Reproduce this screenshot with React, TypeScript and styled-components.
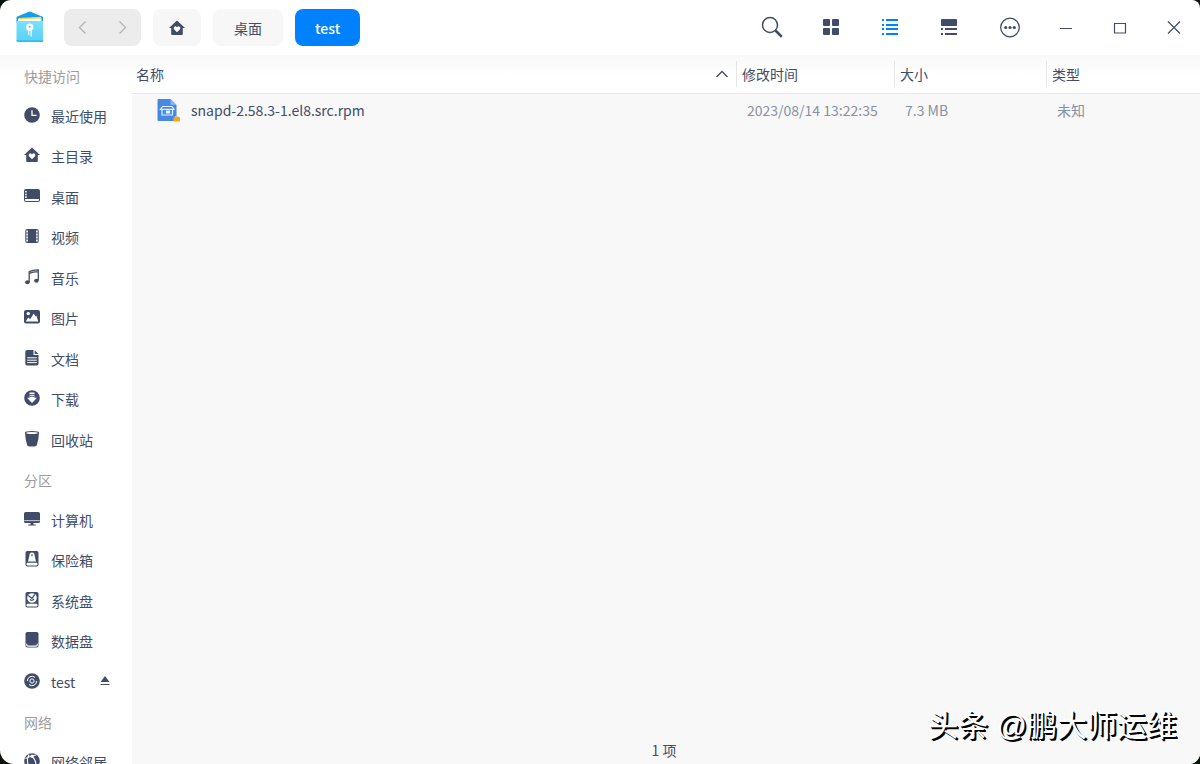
import React from "react";
import styled, { createGlobalStyle, css } from "styled-components";

const INK = "#414d68";

const Global = createGlobalStyle`
  * { box-sizing: border-box; }
  body {
    margin: 0;
    background: #0b120b;
    color: ${INK};
    font: 14px/20px "Noto Sans CJK SC", "Noto Sans", sans-serif;
  }
  button {
    font: inherit;
    color: inherit;
    border: 0;
    padding: 0;
    background: none;
    cursor: pointer;
  }
  ul { list-style: none; margin: 0; padding: 0; }
  svg { display: block; flex: none; }
`;

const Window = styled.div`
  display: flex;
  flex-direction: column;
  height: 100vh;
  overflow: hidden;
  background: #fff;
  border-radius: 11px 8px 11px 14px;
`;

const TitleBar = styled.header`
  display: flex;
  align-items: center;
  flex: none;
  height: 55px;
  padding: 0 14px 0 16px;
`;

const LogoBox = styled.div`
  padding-bottom: 1px;
`;

const NavGroup = styled.div`
  display: flex;
  width: 77px;
  height: 37px;
  margin-left: 20px;
  border-radius: 8px;
  background: #ececec;
`;

const NavButton = styled.button`
  display: grid;
  place-items: center;
  flex: 1;
`;

const Crumbs = styled.nav`
  display: flex;
  gap: 12px;
  margin-left: 12px;
`;

const Crumb = styled.button<{ $active?: boolean }>`
  display: grid;
  place-items: center;
  height: 37px;
  min-width: 48px;
  padding: 1px 20px 0;
  border-radius: 8px;
  background: ${(p) => (p.$active ? "#0081ff" : "#f7f7f7")};
  color: ${(p) => (p.$active ? "#fff" : INK)};
  font-weight: ${(p) => (p.$active ? 500 : 400)};
  &:first-child { padding: 1px 0 0; }
  &:nth-child(2) { min-width: 70px; }
`;

const Tools = styled.div`
  display: flex;
  align-items: center;
  gap: 37px;
  margin-left: auto;
  padding-bottom: 1px;
`;

const ViewTools = styled.div`
  display: flex;
  gap: 35px;
`;

const ToolButton = styled.button`
  display: grid;
  place-items: center;
  width: 24px;
  height: 24px;
`;

const WindowControls = styled.div`
  display: flex;
  gap: 30px;
  margin-left: 32px;
  padding-bottom: 1px;
`;

const Body = styled.div`
  display: flex;
  flex: 1;
  min-height: 0;
`;

const fade = css`
  background-image: linear-gradient(#f8f8f8, #ffffff);
  background-repeat: no-repeat;
  background-size: 100% 20px;
`;

const Sidebar = styled.aside`
  flex: none;
  width: 132px;
  overflow: hidden;
  ${fade}
`;

const GroupTitle = styled.h2`
  display: flex;
  align-items: center;
  height: 40px;
  margin: 0;
  padding: 1px 0 0 24px;
  font-size: 14px;
  font-weight: 400;
  color: #9c9c9c;
`;

const Place = styled.li`
  height: 40px;
  &:nth-child(even) { height: 41px; }
`;

const PlaceLink = styled.a`
  display: flex;
  align-items: center;
  height: 100%;
  padding: 1px 21px 0 24px;
  color: inherit;
  text-decoration: none;
  white-space: nowrap;
  svg { margin-bottom: 2px; }
`;

const PlaceName = styled.span`
  flex: 1;
  margin-left: 11px;
`;

const Main = styled.main`
  display: flex;
  flex-direction: column;
  flex: 1;
  min-width: 0;
  background: #f8f8f8;
`;

const Files = styled.table`
  width: 100%;
  table-layout: fixed;
  border-collapse: separate;
  border-spacing: 0;
  text-align: left;
`;

const HeadRow = styled.tr`
  height: 39px;
  ${fade}
  background-color: #fff;
`;

const HeadCell = styled.th<{ $width?: number }>`
  width: ${(p) => (p.$width ? `${p.$width}px` : "auto")};
  padding: 0;
  border-bottom: 1px solid #e9e9e9;
  font-weight: 400;
`;

const HeadLabel = styled.div<{ $first?: boolean }>`
  display: flex;
  align-items: center;
  justify-content: space-between;
  height: 26px;
  padding: 0 7px 0 ${(p) => (p.$first ? 4 : 5)}px;
  border-left: ${(p) => (p.$first ? "0" : "1px solid #e6e6e6")};
`;

const Cell = styled.td`
  height: 32px;
  padding: 0 0 0 11px;
  color: #8891a3;
  white-space: nowrap;
`;

const FileName = styled.div`
  display: flex;
  align-items: center;
  gap: 10px;
  padding-left: 14px;
  color: ${INK};
`;

const Status = styled.footer`
  margin-top: auto;
  height: 24px;
  padding-right: 4px;
  text-align: center;
`;

const Watermark = styled.div`
  position: absolute;
  right: 23px;
  bottom: 18px;
  color: #fff;
  font-family: "Liberation Sans", "Noto Sans CJK SC", sans-serif;
  font-size: 30px;
  line-height: 40px;
  text-shadow: 1px 1px 0 #000, 2px 2px 0 #000;
`;

const ic = { width: 16, height: 16, viewBox: "0 0 16 16", fill: "currentColor", "aria-hidden": true } as const;
const W = "#fff";

const HomeIcon = () => (
  <svg {...ic}>
    <path d="M8 .4 16 8h-2.2v6a1 1 0 0 1-1 1H3.2a1 1 0 0 1-1-1V8H0z" />
    <path fill={W} d="M8 12.2 5.2 9.4a1.7 1.7 0 0 1 2.4-2.5l.4.4.4-.4a1.7 1.7 0 0 1 2.4 2.5z" />
  </svg>
);

const DiskBase = () => (
  <>
    <rect x="1.5" y="0" width="13" height="15.5" rx="1.8" />
    <rect x="2.5" y="11.8" width="11" height="2.7" rx="1.2" fill={W} />
  </>
);

const icons: Record<string, React.ReactElement> = {
  recent: (
    <svg {...ic}>
      <circle cx="8" cy="8" r="7.8" />
      <path d="M8 3.2V8.4h4.6" fill="none" stroke={W} strokeWidth="1.3" />
    </svg>
  ),
  home: <HomeIcon />,
  desktop: (
    <svg {...ic}>
      <rect y="1" width="16" height="13" rx="2" />
      <path fill={W} d="M1.1 3h1.6v1.6H1.1zM1.1 5.7h1.6v1.6H1.1zM1.1 8.3h1.6v1.6H1.1zM1 11h14v1a1 1 0 0 1-1 1H2a1 1 0 0 1-1-1z" />
    </svg>
  ),
  video: (
    <svg {...ic}>
      <rect x="1.3" y="1" width="13.4" height="14" rx="2" />
      <path fill={W} d="M2.3 2.5h1.6v1.9H2.3zM2.3 5.6h1.6v1.9H2.3zM2.3 8.6h1.6v1.9H2.3zM2.3 11.6h1.6v1.9H2.3zM12.1 2.5h1.6v1.9h-1.6zM12.1 5.6h1.6v1.9h-1.6zM12.1 8.6h1.6v1.9h-1.6zM12.1 11.6h1.6v1.9h-1.6z" />
    </svg>
  ),
  music: (
    <svg {...ic}>
      <path d="M5.2 13V2.6Q9 .8 14.3 .9V11.5M5.2 4.3Q9 2.6 14.3 2.6" fill="none" stroke="currentColor" strokeWidth="1.3" />
      <ellipse cx="3.4" cy="13.2" rx="2.3" ry="2" />
      <ellipse cx="12.4" cy="11.7" rx="2.3" ry="2" />
    </svg>
  ),
  picture: (
    <svg {...ic}>
      <rect y="1" width="16" height="13.5" rx="2" />
      <circle cx="4.3" cy="4.6" r="1.7" fill={W} />
      <path fill={W} d="m1.8 12.6 2.4-4.2 2 1.8L9.7 4.4l1.8 3 .8-.8 2 6z" />
    </svg>
  ),
  document: (
    <svg {...ic}>
      <path d="M3 0h6.5v5h5v8.8a1.7 1.7 0 0 1-1.7 1.7H3a1.7 1.7 0 0 1-1.7-1.7V1.7A1.7 1.7 0 0 1 3 0zM10.7.2l3.8 3.7h-3.8z" />
      <path d="M3.2 7.8h9.6M3.2 10.2h9.6M3.2 12.6h9.6" stroke={W} strokeWidth="1" />
    </svg>
  ),
  download: (
    <svg {...ic}>
      <circle cx="8" cy="8" r="7.8" />
      <path fill={W} d="M5.5 2.6h5v1.6h-5zM5.5 5.2h5v2.6h2.6L8 13 2.9 7.8h2.6z" />
      <path d="M5.5 6.5h5" stroke="currentColor" strokeWidth=".7" />
    </svg>
  ),
  trash: (
    <svg {...ic}>
      <path d="M1 1.5Q1 0 8 0t7 1.5q-.2 7-2.2 12.8Q12.4 15.5 8 15.5T3.2 14.3Q1.2 8.5 1 1.5z" />
      <ellipse cx="8" cy="2" rx="5.8" ry="1.1" fill={W} />
    </svg>
  ),
  computer: (
    <svg {...ic}>
      <rect y="1" width="16" height="11" rx="1.6" />
      <path d="M.2 9.6h15.6" stroke={W} strokeWidth=".7" />
      <path d="M6.5 12h3v1.6h2.2v1H4.3v-1h2.2z" />
    </svg>
  ),
  vault: (
    <svg {...ic}>
      <DiskBase />
      <path fill={W} d="M5.3 5q0-3.6 2.7-3.6T10.7 5L12 10.6H4z" />
      <path d="M7.4 3.5h1.2v1.8H7.4z" />
    </svg>
  ),
  system: (
    <svg {...ic}>
      <DiskBase />
      <circle cx="8" cy="6" r="4.8" fill={W} />
      <path d="M4.2 3.6 8 6.3l2.8-4M6 7.3q2 2.2 4-.5" fill="none" stroke="currentColor" strokeWidth="1.2" />
    </svg>
  ),
  data: (
    <svg {...ic}>
      <rect x="1.5" y="0" width="13" height="15.5" rx="1.8" />
      <path d="M2.7 11.8v1A1.3 1.3 0 0 0 4 14.1h8a1.3 1.3 0 0 0 1.3-1.3v-1" fill="none" stroke={W} strokeWidth="1.1" />
    </svg>
  ),
  disc: (
    <svg {...ic}>
      <circle cx="8" cy="8" r="7.8" />
      <g fill="none" stroke={W} strokeWidth="1">
        <circle cx="8" cy="8" r="2.1" />
        <path d="M3.3 8A4.7 4.7 0 0 1 11 4.4M12.7 8A4.7 4.7 0 0 1 5 11.6" />
      </g>
    </svg>
  ),
  network: (
    <svg {...ic}>
      <circle cx="8" cy="8" r="7.8" />
      <g fill="none" stroke={W} strokeWidth="1.1">
        <path d="M5 1.5Q1.5 8 6 15.5M8 3.5q5 4 3.5 12M1.5 5.5l6-2.5L12 2" />
      </g>
      <circle cx="8" cy="3.2" r="1.6" fill={W} />
    </svg>
  ),
};

const AppLogo = () => (
  <svg width="28" height="32" viewBox="0 0 28 32" role="img" aria-label="文件管理器">
    <defs>
      <linearGradient id="folder" x1="0" y1="0" x2="0" y2="1">
        <stop offset="0" stopColor="#7be0fb" />
        <stop offset="1" stopColor="#58d0f7" />
      </linearGradient>
    </defs>
    <path d="M.5 6.5Q.5 5.7 1.3 5.4L13 .7q.7-.3 1.4 0l11.800 4.700q.8.3.8 1.1V12H.5z" fill="#119eea" />
    <path d="M2.500 6.900 25 5.700v6H2.500z" fill="#ffd54a" />
    <path d="M2 8.200 25.500 7.500V12H2z" fill="#fff" />
    <path d="M.5 10h26.500v19.800a1 1 0 0 1-1 1H1.500a1 1 0 0 1-1-1z" fill="url(#folder)" />
    <path d="M.5 29.500h26.500v.3a1 1 0 0 1-1 1H1.500a1 1 0 0 1-1-1z" fill="#16b3ec" />
    <circle cx="13.700" cy="16.300" r="3.700" fill="#fff" />
    <circle cx="13.700" cy="15.800" r="1" fill="#4bbfe8" />
    <path d="M12 19h1.300v5.500L12 23.500zM14.500 19h1.300v7l-1.300-1z" fill="#e9fbff" />
  </svg>
);

const RpmIcon = () => (
  <svg width="24" height="24" viewBox="0 0 24 24" aria-hidden>
    <path d="M1.500 1h12l6 6v16h-18a1 1 0 0 1-1-1V2a1 1 0 0 1 1-1z" fill="#4788e5" />
    <path d="M13.500 1l6 6h-5a1 1 0 0 1-1-1z" fill="#86b4f4" />
    <g fill="none" stroke="#e4eefd" strokeWidth="1.200">
      <path d="M5.500 8.500h9.500l2 2.800H3.500zM5 11.500v5.500h10.500v-5.500" />
      <path d="M9.500 13h3v2h-3z" fill="#fff" />
    </g>
    <path d="M18 19.300q1.700-3.300 3.400 0" fill="none" stroke="#f9c559" />
    <rect x="16.500" y="19" width="6.500" height="4.500" rx="1" fill="#f5a712" />
  </svg>
);

const Arrow = ({ d }: { d: string }) => (
  <svg width="12" height="13" viewBox="0 0 12 13" fill="none" stroke="#b4b4b4" strokeWidth="1.300"><path d={d} /></svg>
);

const views = [
  {
    label: "搜索",
    icon: (
      <svg width="24" height="24" viewBox="0 0 24 24" fill="none" stroke="currentColor">
        <circle cx="10" cy="10" r="7.500" strokeWidth="1.500" />
        <path d="m15.500 15.500 6.300 6.300" strokeWidth="2.600" />
      </svg>
    ),
  },
  {
    label: "图标视图",
    icon: (
      <svg {...ic}>
        <rect width="7" height="7" rx="1" /><rect x="9" width="7" height="7" rx="1" />
        <rect y="9" width="7" height="7" rx="1" /><rect x="9" y="9" width="7" height="7" rx="1" />
      </svg>
    ),
  },
  {
    label: "列表视图",
    icon: (
      <svg {...ic} fill="#0081ff">
        <path d="M0 0h2v2H0zM4 0h12v2H4zM0 5h2v2H0zM4 5h12v2H4zM0 9h2v2H0zM4 9h12v2H4zM0 14h2v2H0zM4 14h12v2H4z" />
      </svg>
    ),
  },
  {
    label: "分栏视图",
    icon: (
      <svg {...ic}>
        <rect width="16" height="7" rx="1" />
        <path d="M0 9h2v2H0zM4 9h12v2H4zM0 14h2v2H0zM4 14h12v2H4z" />
      </svg>
    ),
  },
];

const controls = [
  { label: "最小化", d: "M6 13.500h12" },
  { label: "最大化", d: "M6.500 8.500h11v9.500h-11z" },
  { label: "关闭", d: "m6 6.500 12 12M18 6.500 6 18.500" },
];

const groups = [
  {
    title: "快捷访问",
    items: [
      ["recent", "最近使用"], ["home", "主目录"], ["desktop", "桌面"], ["video", "视频"], ["music", "音乐"],
      ["picture", "图片"], ["document", "文档"], ["download", "下载"], ["trash", "回收站"],
    ],
  },
  {
    title: "分区",
    items: [["computer", "计算机"], ["vault", "保险箱"], ["system", "系统盘"], ["data", "数据盘"], ["disc", "test"]],
  },
  { title: "网络", items: [["network", "网络邻居"]] },
];

export default function App() {
  return (
    <>
      <Global />
      <Window>
        <TitleBar>
          <LogoBox><AppLogo /></LogoBox>
          <NavGroup>
            <NavButton aria-label="后退"><Arrow d="M8.500 .5 2.500 6.500l6 6" /></NavButton>
            <NavButton aria-label="前进"><Arrow d="m3.500 .5 6 6-6 6" /></NavButton>
          </NavGroup>
          <Crumbs aria-label="路径">
            <Crumb aria-label="主目录"><HomeIcon /></Crumb>
            <Crumb>桌面</Crumb>
            <Crumb $active>test</Crumb>
          </Crumbs>
          <Tools>
            <ViewTools>
              {views.map((t) => (
                <ToolButton key={t.label} aria-label={t.label}>{t.icon}</ToolButton>
              ))}
            </ViewTools>
            <ToolButton aria-label="菜单">
              <svg width="22" height="22" viewBox="0 0 22 22" fill="currentColor">
                <circle cx="11" cy="11.500" r="9.300" fill="none" stroke="currentColor" strokeWidth="1.300" />
                <circle cx="6.700" cy="11.500" r="1.600" /><circle cx="11" cy="11.500" r="1.600" /><circle cx="15.300" cy="11.500" r="1.600" />
              </svg>
            </ToolButton>
          </Tools>
          <WindowControls>
            {controls.map((c) => (
              <ToolButton key={c.label} aria-label={c.label}>
                <svg width="24" height="24" viewBox="0 0 24 24" fill="none" stroke="currentColor" strokeWidth="1.200"><path d={c.d} /></svg>
              </ToolButton>
            ))}
          </WindowControls>
        </TitleBar>
        <Body>
          <Sidebar>
            {groups.map((g) => (
              <section key={g.title}>
                <GroupTitle>{g.title}</GroupTitle>
                <ul>
                  {g.items.map(([icon, name]) => (
                    <Place key={name}>
                      <PlaceLink href="#">
                        {icons[icon]}
                        <PlaceName>{name}</PlaceName>
                        {icon === "disc" && (
                          <svg width="12" height="12" viewBox="0 0 12 12" fill="currentColor"><path d="m6 1 4.500 6h-9zM1.500 9h9v1h-9z" /></svg>
                        )}
                      </PlaceLink>
                    </Place>
                  ))}
                </ul>
              </section>
            ))}
          </Sidebar>
          <Main>
            <Files>
              <thead>
                <HeadRow>
                  <HeadCell>
                    <HeadLabel $first>
                      名称
                      <svg width="14" height="8" viewBox="0 0 14 8" fill="none" stroke="currentColor" strokeWidth="1.300"><path d="m1.500 7 5.500-5.500L12.500 7" /></svg>
                    </HeadLabel>
                  </HeadCell>
                  <HeadCell $width={158}><HeadLabel>修改时间</HeadLabel></HeadCell>
                  <HeadCell $width={152}><HeadLabel>大小</HeadLabel></HeadCell>
                  <HeadCell $width={154}><HeadLabel>类型</HeadLabel></HeadCell>
                </HeadRow>
              </thead>
              <tbody>
                <tr>
                  <Cell><FileName><RpmIcon />snapd-2.58.3-1.el8.src.rpm</FileName></Cell>
                  <Cell>2023/08/14 13:22:35</Cell>
                  <Cell>7.3 MB</Cell>
                  <Cell>未知</Cell>
                </tr>
              </tbody>
            </Files>
            <Status>1 项</Status>
          </Main>
        </Body>
        <Watermark>头条 @鹏大师运维</Watermark>
      </Window>
    </>
  );
}
